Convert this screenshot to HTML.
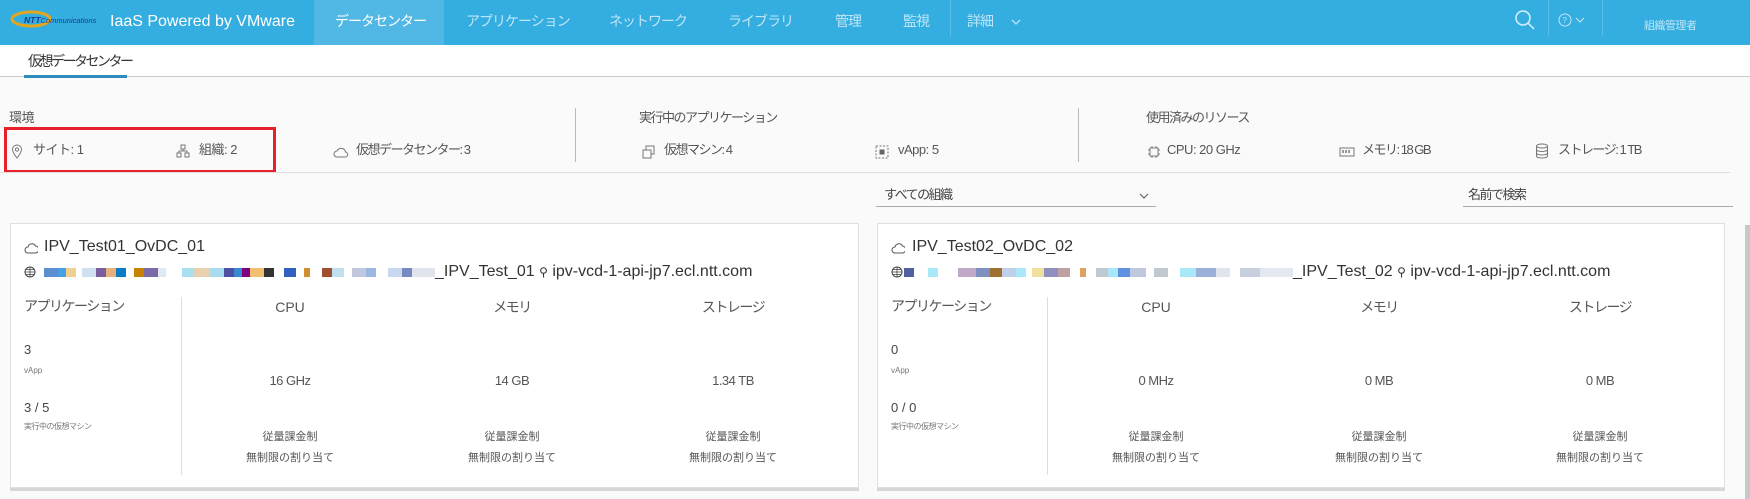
<!DOCTYPE html>
<html><head><meta charset="utf-8"><style>
*{box-sizing:border-box;margin:0;padding:0}
body{width:1750px;height:499px;overflow:hidden;background:#fafafa;font-family:"Liberation Sans","Noto Sans CJK JP",sans-serif;color:#565656;position:relative;line-height:1.2}
.a{position:absolute;white-space:nowrap}
#hdr{position:absolute;left:0;top:0;width:1750px;height:45px;background:#34ade0}
.nav{position:absolute;top:13px;font-size:14px;letter-spacing:-1px;color:#bfe6f7}
.sm{font-size:13px;letter-spacing:-.5px}
.blur{display:flex;align-items:center;overflow:hidden;height:12px}
.blur span{flex:none;height:9px}
.card{position:absolute;background:#fff;border:1px solid #e0e0e0;box-shadow:0 3px 0 #d6d6d6}
.c{text-align:center;width:160px}
.j{letter-spacing:-1.5px}
</style></head><body>
<div id="hdr">
 <svg class="a" style="left:9px;top:8px" width="92" height="22"><ellipse cx="22" cy="11" rx="19" ry="7" fill="none" stroke="#e2a51e" stroke-width="3"/><text x="15" y="15" font-size="8.5" font-style="italic" font-weight="bold" fill="#1f3b8a" font-family="Liberation Sans">NTT<tspan font-weight="normal" font-size="7.5">Communications</tspan></text></svg>
 <div class="a" style="left:110px;top:12px;font-size:16px;color:#fff">IaaS Powered by VMware</div>
 <div class="a" style="left:314px;top:0;width:130px;height:45px;background:#51b8e6"></div>
 <div class="nav a" style="left:335px;color:#fff">データセンター</div>
 <div class="nav a" style="left:466px">アプリケーション</div>
 <div class="nav a" style="left:609px">ネットワーク</div>
 <div class="nav a" style="left:728px">ライブラリ</div>
 <div class="nav a" style="left:835px">管理</div>
 <div class="nav a" style="left:903px">監視</div>
 <div class="a" style="left:950px;top:0;width:1px;height:36px;background:#5cbde6"></div>
 <div class="nav a" style="left:967px">詳細</div>
 <svg class="a" style="left:1010px;top:17px" width="12" height="10"><path d="M2 3l4 4 4-4" stroke="#bfe6f7" fill="none" stroke-width="1.3"/></svg>
 <svg class="a" style="left:1513px;top:8px" width="24" height="24"><circle cx="10" cy="10" r="7" stroke="#d8f0fb" stroke-width="1.5" fill="none"/><path d="M15 15l6 6" stroke="#d8f0fb" stroke-width="1.5"/></svg>
 <div class="a" style="left:1548px;top:0;width:1px;height:36px;background:#5cbde6"></div>
 <svg class="a" style="left:1558px;top:12px" width="34" height="16"><circle cx="7" cy="8" r="6" stroke="#bfe6f7" fill="none"/><text x="4.5" y="11" font-size="8" fill="#bfe6f7">?</text><path d="M18 6l4 4 4-4" stroke="#bfe6f7" fill="none" stroke-width="1.2"/></svg>
 <div class="a" style="left:1602px;top:0;width:1px;height:36px;background:#5cbde6"></div>
 <div class="a" style="left:1644px;top:20px;font-size:11px;letter-spacing:-.5px;color:#bfe6f7">組織管理者</div>
</div>
<div class="a" style="left:0;top:45px;width:1750px;height:32px;background:#fff;border-bottom:1px solid #ccc"></div>
<div class="a" style="left:28px;top:53px;font-size:14px;letter-spacing:-2.5px;color:#333">仮想データセンター</div>
<div class="a" style="left:24px;top:75px;width:103px;height:3px;background:#2f8dbb"></div>

<div class="a sm" style="left:9px;top:110px">環境</div>
<div class="a" style="left:4px;top:127px;width:272px;height:46px;border:3px solid #e8202a"></div>
<svg class="a" style="left:11px;top:144px" width="12" height="16"><path d="M6 14C2 9 1.5 7 1.5 5.5a4.5 4.5 0 019 0C10.5 7 10 9 6 14z" fill="none" stroke="#777"/><circle cx="6" cy="5.5" r="1.6" fill="none" stroke="#777"/></svg>
<div class="a sm" style="left:33px;top:142px">サイト: 1</div>
<svg class="a" style="left:176px;top:144px" width="14" height="14"><rect x="5" y="1" width="4" height="4" fill="none" stroke="#777"/><rect x="1" y="9" width="4" height="4" fill="none" stroke="#777"/><rect x="9" y="9" width="4" height="4" fill="none" stroke="#777"/><path d="M7 5v2M3 9V7h8v2" fill="none" stroke="#777"/></svg>
<div class="a sm" style="left:199px;top:142px">組織: 2</div>
<svg class="a" style="left:333px;top:145px" width="16" height="13"><path d="M4 12a3 3 0 010-6 4.5 4.5 0 018.5 1A2.5 2.5 0 0112 12z" fill="none" stroke="#777"/></svg>
<div class="a sm j" style="left:356px;top:142px">仮想データセンター: 3</div>
<div class="a" style="left:575px;top:108px;width:1px;height:54px;background:#bbb"></div>
<div class="a sm j" style="left:639px;top:110px">実行中のアプリケーション</div>
<svg class="a" style="left:642px;top:145px" width="14" height="14"><rect x="4" y="1" width="8" height="8" fill="none" stroke="#777"/><rect x="1" y="5" width="8" height="8" fill="#fafafa" stroke="#777"/></svg>
<div class="a sm j" style="left:664px;top:142px">仮想マシン: 4</div>
<svg class="a" style="left:875px;top:145px" width="14" height="14"><rect x="1" y="1" width="12" height="12" fill="none" stroke="#777" stroke-dasharray="2 1.5"/><rect x="4.5" y="4.5" width="5" height="5" fill="#666"/></svg>
<div class="a sm" style="left:898px;top:142px">vApp: 5</div>
<div class="a" style="left:1078px;top:108px;width:1px;height:54px;background:#bbb"></div>
<div class="a sm j" style="left:1146px;top:110px">使用済みのリソース</div>
<svg class="a" style="left:1147px;top:145px" width="14" height="14"><rect x="3" y="3" width="8" height="8" fill="none" stroke="#777"/><path d="M5 1v2M9 1v2M5 11v2M9 11v2M1 5h2M1 9h2M11 5h2M11 9h2" stroke="#777"/></svg>
<div class="a sm" style="left:1167px;top:142px">CPU: 20 GHz</div>
<svg class="a" style="left:1339px;top:146px" width="16" height="12"><rect x="1" y="2" width="14" height="8" fill="none" stroke="#777"/><path d="M4 4v3M7 4v3M10 4v3" stroke="#777" stroke-width="1.5"/></svg>
<div class="a sm j" style="left:1362px;top:142px">メモリ: 18 GB</div>
<svg class="a" style="left:1535px;top:143px" width="14" height="16"><ellipse cx="7" cy="3" rx="5.5" ry="2" fill="none" stroke="#777"/><path d="M1.5 3v10c0 2.6 11 2.6 11 0V3M1.5 6.5c0 2.6 11 2.6 11 0M1.5 10c0 2.6 11 2.6 11 0" fill="none" stroke="#777"/></svg>
<div class="a sm j" style="left:1558px;top:142px">ストレージ: 1 TB</div>
<div class="a" style="left:0;top:172px;width:1730px;height:1px;background:#ddd"></div>

<div class="a sm j" style="left:884px;top:187px;color:#444">すべての組織</div>
<svg class="a" style="left:1138px;top:191px" width="12" height="10"><path d="M2 3l4 4 4-4" stroke="#666" fill="none" stroke-width="1.2"/></svg>
<div class="a" style="left:876px;top:206px;width:280px;height:1px;background:#aaa"></div>
<div class="a sm j" style="left:1468px;top:187px;color:#444">名前で検索</div>
<div class="a" style="left:1463px;top:206px;width:270px;height:1px;background:#aaa"></div>
<div class="a" style="left:1745px;top:225px;width:5px;height:274px;background:#c8c8c8"></div>

<div class="card" style="left:10px;top:223px;width:849px;height:265px"></div>
<div class="card" style="left:877px;top:223px;width:848px;height:265px"></div>

<!-- card1 -->
<svg class="a" style="left:24px;top:241px" width="14" height="13"><path d="M4 12a3 3 0 010-6 4 4 0 017.5-1A2.6 2.6 0 0111 12z" fill="none" stroke="#555"/></svg>
<div class="a" style="left:44px;top:237px;font-size:16px;color:#333">IPV_Test01_OvDC_01</div>
<svg class="a" style="left:24px;top:266px" width="12" height="12"><circle cx="6" cy="6" r="5" fill="none" stroke="#444"/><path d="M1 6h10M6 1v10M2 3.5h8M2 8.5h8" stroke="#444" stroke-width=".8"/></svg>
<div class="a blur" style="left:44px;top:266px;width:391px">
<span style="width:14px;background:#5b8fd0"></span><span style="width:8px;background:#48a0e0"></span><span style="width:10px;background:#f0d090"></span><span style="width:6px;background:#fff"></span><span style="width:14px;background:#cfe0f0"></span><span style="width:10px;background:#7a5fa0"></span><span style="width:10px;background:#e8b07a"></span><span style="width:10px;background:#0a7dc4"></span><span style="width:8px;background:#fff"></span><span style="width:10px;background:#c98200"></span><span style="width:14px;background:#7a6aa8"></span><span style="width:8px;background:#e0e8f0"></span><span style="width:16px;background:#fff"></span><span style="width:12px;background:#a8e0f0"></span><span style="width:16px;background:#e8d0b0"></span><span style="width:14px;background:#aadcf0"></span><span style="width:10px;background:#5050a0"></span><span style="width:8px;background:#3a8ad0"></span><span style="width:8px;background:#800080"></span><span style="width:14px;background:#f0c070"></span><span style="width:10px;background:#333"></span><span style="width:10px;background:#fff"></span><span style="width:12px;background:#3060c0"></span><span style="width:8px;background:#fff"></span><span style="width:6px;background:#d09030"></span><span style="width:12px;background:#fff"></span><span style="width:10px;background:#a05030"></span><span style="width:12px;background:#c0e0f0"></span><span style="width:8px;background:#fff"></span><span style="width:14px;background:#c0c8e0"></span><span style="width:10px;background:#9ab8e0"></span><span style="width:12px;background:#fff"></span><span style="width:14px;background:#c8d8f0"></span><span style="width:10px;background:#7888c0"></span><span style="width:40px;background:#e0e4ec"></span></div>
<div class="a" style="left:435px;top:262px;font-size:16px;color:#333">_IPV_Test_01 <span style="font-size:12px">⚲</span> ipv-vcd-1-api-jp7.ecl.ntt.com</div>
<div class="a j" style="left:24px;top:298px;font-size:14px">アプリケーション</div>
<div class="a" style="left:181px;top:297px;width:1px;height:178px;background:#ddd"></div>
<div class="a" style="left:24px;top:342px;font-size:13px;color:#444">3</div>
<div class="a" style="left:24px;top:366px;font-size:8px;color:#777">vApp</div>
<div class="a" style="left:24px;top:400px;font-size:13px;color:#444">3 / 5</div>
<div class="a" style="left:24px;top:422px;font-size:8px;color:#777;letter-spacing:-.5px">実行中の仮想マシン</div>
<div class="a c" style="left:210px;top:299px;font-size:14px">CPU</div>
<div class="a c j" style="left:432px;top:299px;font-size:14px">メモリ</div>
<div class="a c j" style="left:653px;top:299px;font-size:14px">ストレージ</div>
<div class="a c sm" style="left:210px;top:373px">16 GHz</div>
<div class="a c sm" style="left:432px;top:373px">14 GB</div>
<div class="a c sm" style="left:653px;top:373px">1.34 TB</div>
<div class="a c" style="left:210px;top:431px;font-size:11px">従量課金制</div>
<div class="a c" style="left:432px;top:431px;font-size:11px">従量課金制</div>
<div class="a c" style="left:653px;top:431px;font-size:11px">従量課金制</div>
<div class="a c" style="left:210px;top:452px;font-size:11px">無制限の割り当て</div>
<div class="a c" style="left:432px;top:452px;font-size:11px">無制限の割り当て</div>
<div class="a c" style="left:653px;top:452px;font-size:11px">無制限の割り当て</div>

<!-- card2 -->
<svg class="a" style="left:891px;top:241px" width="14" height="13"><path d="M4 12a3 3 0 010-6 4 4 0 017.5-1A2.6 2.6 0 0111 12z" fill="none" stroke="#555"/></svg>
<div class="a" style="left:912px;top:237px;font-size:16px;color:#333">IPV_Test02_OvDC_02</div>
<svg class="a" style="left:891px;top:266px" width="12" height="12"><circle cx="6" cy="6" r="5" fill="none" stroke="#444"/><path d="M1 6h10M6 1v10M2 3.5h8M2 8.5h8" stroke="#444" stroke-width=".8"/></svg>
<div class="a blur" style="left:904px;top:266px;width:389px">
<span style="width:10px;background:#5060a0"></span><span style="width:14px;background:#fff"></span><span style="width:10px;background:#a8e8f8"></span><span style="width:20px;background:#fff"></span><span style="width:18px;background:#c0a8c8"></span><span style="width:14px;background:#8090c0"></span><span style="width:12px;background:#a07030"></span><span style="width:14px;background:#c0d0e8"></span><span style="width:10px;background:#a8e8f8"></span><span style="width:6px;background:#fff"></span><span style="width:12px;background:#f0e0a0"></span><span style="width:14px;background:#9090c0"></span><span style="width:12px;background:#c0a0a0"></span><span style="width:10px;background:#fff"></span><span style="width:6px;background:#e0a060"></span><span style="width:10px;background:#fff"></span><span style="width:12px;background:#c0c8d0"></span><span style="width:10px;background:#a8e8f8"></span><span style="width:12px;background:#6090e0"></span><span style="width:16px;background:#c0c8e0"></span><span style="width:8px;background:#fff"></span><span style="width:14px;background:#c0c8d0"></span><span style="width:12px;background:#fff"></span><span style="width:16px;background:#a8e8f8"></span><span style="width:20px;background:#9ab0d8"></span><span style="width:14px;background:#e0e4ec"></span><span style="width:10px;background:#fff"></span><span style="width:20px;background:#c8d0e0"></span><span style="width:40px;background:#e4e8f0"></span></div>
<div class="a" style="left:1293px;top:262px;font-size:16px;color:#333">_IPV_Test_02 <span style="font-size:12px">⚲</span> ipv-vcd-1-api-jp7.ecl.ntt.com</div>
<div class="a j" style="left:891px;top:298px;font-size:14px">アプリケーション</div>
<div class="a" style="left:1047px;top:297px;width:1px;height:178px;background:#ddd"></div>
<div class="a" style="left:891px;top:342px;font-size:13px;color:#444">0</div>
<div class="a" style="left:891px;top:366px;font-size:8px;color:#777">vApp</div>
<div class="a" style="left:891px;top:400px;font-size:13px;color:#444">0 / 0</div>
<div class="a" style="left:891px;top:422px;font-size:8px;color:#777;letter-spacing:-.5px">実行中の仮想マシン</div>
<div class="a c" style="left:1076px;top:299px;font-size:14px">CPU</div>
<div class="a c j" style="left:1299px;top:299px;font-size:14px">メモリ</div>
<div class="a c j" style="left:1520px;top:299px;font-size:14px">ストレージ</div>
<div class="a c sm" style="left:1076px;top:373px">0 MHz</div>
<div class="a c sm" style="left:1299px;top:373px">0 MB</div>
<div class="a c sm" style="left:1520px;top:373px">0 MB</div>
<div class="a c" style="left:1076px;top:431px;font-size:11px">従量課金制</div>
<div class="a c" style="left:1299px;top:431px;font-size:11px">従量課金制</div>
<div class="a c" style="left:1520px;top:431px;font-size:11px">従量課金制</div>
<div class="a c" style="left:1076px;top:452px;font-size:11px">無制限の割り当て</div>
<div class="a c" style="left:1299px;top:452px;font-size:11px">無制限の割り当て</div>
<div class="a c" style="left:1520px;top:452px;font-size:11px">無制限の割り当て</div>
</body></html>
